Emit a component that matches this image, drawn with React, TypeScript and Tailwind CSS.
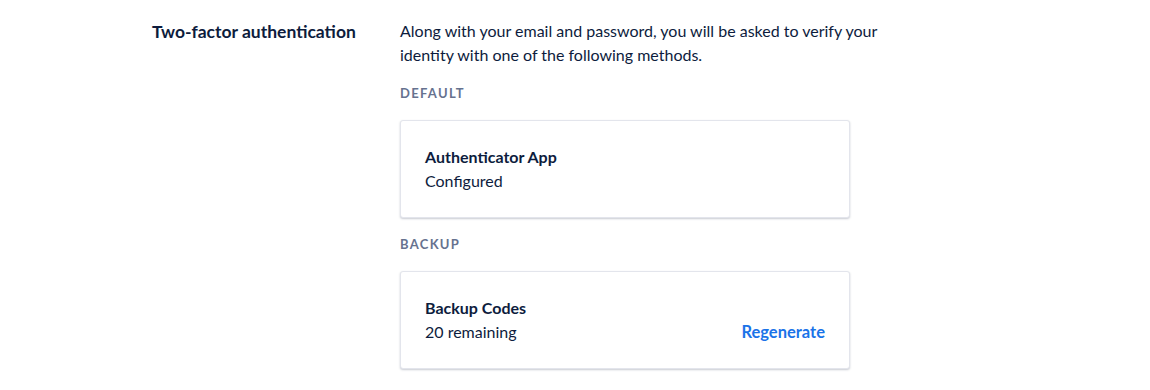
import React from 'react';

const methods = [
  {
    label: 'Default',
    title: 'Authenticator App',
    status: 'Configured',
    action: null as string | null,
  },
  {
    label: 'Backup',
    title: 'Backup Codes',
    status: '20 remaining',
    action: 'Regenerate',
  },
];

const App: React.FC = () => {
  return (
    <div className="min-h-[390px] bg-white font-['Lato',sans-serif] text-[#0d1c3d]">
      <section className="flex pl-[152px] pt-[19px]">
        <h2 className="w-[248px] shrink-0 text-[17.5px] font-bold leading-[26px]">
          Two-factor authentication
        </h2>
        <div className="w-[500px]">
          <p className="text-[16px] leading-[24px]">
            Along with your email and password, you will be asked to verify your identity with one of the following
            methods.
          </p>
          {methods.map((m, i) => (
            <div key={m.label} className={i === 0 ? 'mt-[18px]' : 'mt-[18px]'}>
              <div className="text-[13px] font-bold uppercase leading-4 tracking-[0.1em] text-[#66728f]">
                {m.label}
              </div>
              <div className="mt-[19px] flex w-[450px] items-end justify-between rounded-[3px] border border-[#e3e5ec] bg-white px-6 py-6 shadow-[0_1px_2px_rgba(40,50,80,0.25)]">
                <div className="text-[16px] leading-[24px]">
                  <div className="font-bold">{m.title}</div>
                  <div>{m.status}</div>
                </div>
                {m.action && (
                  <button className="text-[16.5px] font-bold leading-[24px] text-[#1a73e8]">{m.action}</button>
                )}
              </div>
            </div>
          ))}
        </div>
      </section>
    </div>
  );
};

export default App;
